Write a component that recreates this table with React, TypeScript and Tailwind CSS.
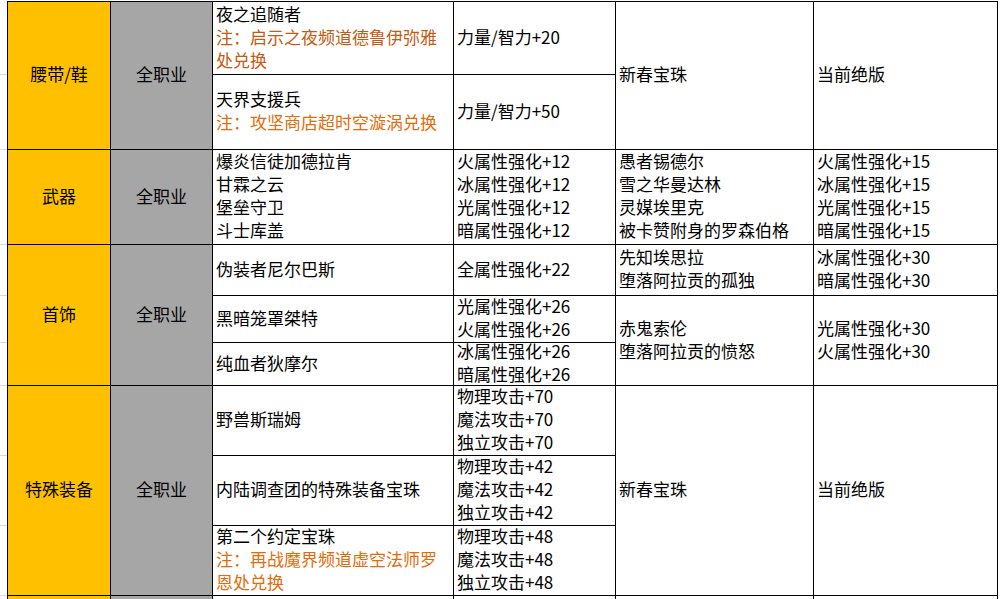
import clsx from 'clsx'
import { ReactNode } from 'react'

interface CellProps {
  className?: string
  center?: boolean
  children?: ReactNode
}

function Cell({ className, center, children }: CellProps) {
  return (
    <div
      className={clsx(
        'flex flex-col justify-center whitespace-nowrap border-b border-r border-black pb-1',
        center ? 'items-center' : 'pl-[3px]',
        className
      )}
    >
      {children}
    </div>
  )
}

function Lines({ items }: { items: string[] }) {
  return (
    <>
      {items.map((item, index) => (
        <span key={index}>{item}</span>
      ))}
    </>
  )
}

const gutterRows = [
  'row-start-1',
  'row-start-2',
  'row-start-3',
  'row-start-4',
  'row-start-5',
  'row-start-6',
  'row-start-7',
  'row-start-8',
  'row-start-9',
]

export default function App() {
  return (
    <div
      className="h-[599px] w-[1000px] overflow-hidden bg-white pt-px text-[17px] leading-[23px] text-black"
      style={{ fontFamily: '"Noto Sans CJK SC", "Noto Sans", sans-serif' }}
    >
      <div className="grid grid-cols-[7px_104px_102px_241px_162px_198px_184px] grid-rows-[74px_75px_95px_51px_47px_43px_70px_70px_70px_20px]">
        {gutterRows.map((row, index) => (
          <div key={index} className={clsx('col-start-1 border-b border-[#d9d9d9]', row)} />
        ))}

        {/* 腰带/鞋 */}
        <Cell center className="col-start-2 row-span-2 row-start-1 border-l border-t bg-[#ffc000]">
          腰带/鞋
        </Cell>
        <Cell center className="col-start-3 row-span-2 row-start-1 border-t bg-[#a6a6a6]">
          全职业
        </Cell>
        <Cell className="col-start-4 row-start-1 border-t">
          <span>夜之追随者</span>
          <span className="text-[#c55a11]">注：启示之夜频道德鲁伊弥雅</span>
          <span className="text-[#c55a11]">处兑换</span>
        </Cell>
        <Cell className="col-start-5 row-start-1 border-t">力量/智力+20</Cell>
        <Cell className="col-start-6 row-span-2 row-start-1 border-t">新春宝珠</Cell>
        <Cell className="col-start-7 row-span-2 row-start-1 border-t">当前绝版</Cell>
        <Cell className="col-start-4 row-start-2">
          <span>天界支援兵</span>
          <span className="text-[#e46c0a]">注：攻坚商店超时空漩涡兑换</span>
        </Cell>
        <Cell className="col-start-5 row-start-2">力量/智力+50</Cell>

        {/* 武器 */}
        <Cell center className="col-start-2 row-start-3 border-l bg-[#ffc000]">
          武器
        </Cell>
        <Cell center className="col-start-3 row-start-3 bg-[#a6a6a6]">
          全职业
        </Cell>
        <Cell className="col-start-4 row-start-3">
          <Lines items={['爆炎信徒加德拉肯', '甘霖之云', '堡垒守卫', '斗士库盖']} />
        </Cell>
        <Cell className="col-start-5 row-start-3">
          <Lines items={['火属性强化+12', '冰属性强化+12', '光属性强化+12', '暗属性强化+12']} />
        </Cell>
        <Cell className="col-start-6 row-start-3">
          <Lines items={['愚者锡德尔', '雪之华曼达林', '灵媒埃里克', '被卡赞附身的罗森伯格']} />
        </Cell>
        <Cell className="col-start-7 row-start-3">
          <Lines items={['火属性强化+15', '冰属性强化+15', '光属性强化+15', '暗属性强化+15']} />
        </Cell>

        {/* 首饰 */}
        <Cell center className="col-start-2 row-span-3 row-start-4 border-l bg-[#ffc000]">
          首饰
        </Cell>
        <Cell center className="col-start-3 row-span-3 row-start-4 bg-[#a6a6a6]">
          全职业
        </Cell>
        <Cell className="col-start-4 row-start-4">伪装者尼尔巴斯</Cell>
        <Cell className="col-start-5 row-start-4">全属性强化+22</Cell>
        <Cell className="col-start-6 row-start-4">
          <Lines items={['先知埃思拉', '堕落阿拉贡的孤独']} />
        </Cell>
        <Cell className="col-start-7 row-start-4">
          <Lines items={['冰属性强化+30', '暗属性强化+30']} />
        </Cell>
        <Cell className="col-start-4 row-start-5">黑暗笼罩桀特</Cell>
        <Cell className="col-start-5 row-start-5">
          <Lines items={['光属性强化+26', '火属性强化+26']} />
        </Cell>
        <Cell className="col-start-6 row-span-2 row-start-5">
          <Lines items={['赤鬼索伦', '堕落阿拉贡的愤怒']} />
        </Cell>
        <Cell className="col-start-7 row-span-2 row-start-5">
          <Lines items={['光属性强化+30', '火属性强化+30']} />
        </Cell>
        <Cell className="col-start-4 row-start-6">纯血者狄摩尔</Cell>
        <Cell className="col-start-5 row-start-6">
          <Lines items={['冰属性强化+26', '暗属性强化+26']} />
        </Cell>

        {/* 特殊装备 */}
        <Cell center className="col-start-2 row-span-3 row-start-7 border-l bg-[#ffc000]">
          特殊装备
        </Cell>
        <Cell center className="col-start-3 row-span-3 row-start-7 bg-[#a6a6a6]">
          全职业
        </Cell>
        <Cell className="col-start-4 row-start-7">野兽斯瑞姆</Cell>
        <Cell className="col-start-5 row-start-7">
          <Lines items={['物理攻击+70', '魔法攻击+70', '独立攻击+70']} />
        </Cell>
        <Cell className="col-start-6 row-span-3 row-start-7">新春宝珠</Cell>
        <Cell className="col-start-7 row-span-3 row-start-7">当前绝版</Cell>
        <Cell className="col-start-4 row-start-8">内陆调查团的特殊装备宝珠</Cell>
        <Cell className="col-start-5 row-start-8">
          <Lines items={['物理攻击+42', '魔法攻击+42', '独立攻击+42']} />
        </Cell>
        <Cell className="col-start-4 row-start-9">
          <span>第二个约定宝珠</span>
          <span className="text-[#e46c0a]">注：再战魔界频道虚空法师罗</span>
          <span className="text-[#e46c0a]">恩处兑换</span>
        </Cell>
        <Cell className="col-start-5 row-start-9">
          <Lines items={['物理攻击+48', '魔法攻击+48', '独立攻击+48']} />
        </Cell>

        {/* next row, cut off */}
        <div className="col-start-2 row-start-10 border-x border-black bg-[#ffc000]" />
        <div className="col-start-3 row-start-10 border-r border-black bg-[#a6a6a6]" />
        <div className="col-start-4 row-start-10 border-r border-black" />
        <div className="col-start-5 row-start-10 border-r border-black" />
        <div className="col-start-6 row-start-10 border-r border-black" />
        <div className="col-start-7 row-start-10 border-r border-black" />
      </div>
    </div>
  )
}
